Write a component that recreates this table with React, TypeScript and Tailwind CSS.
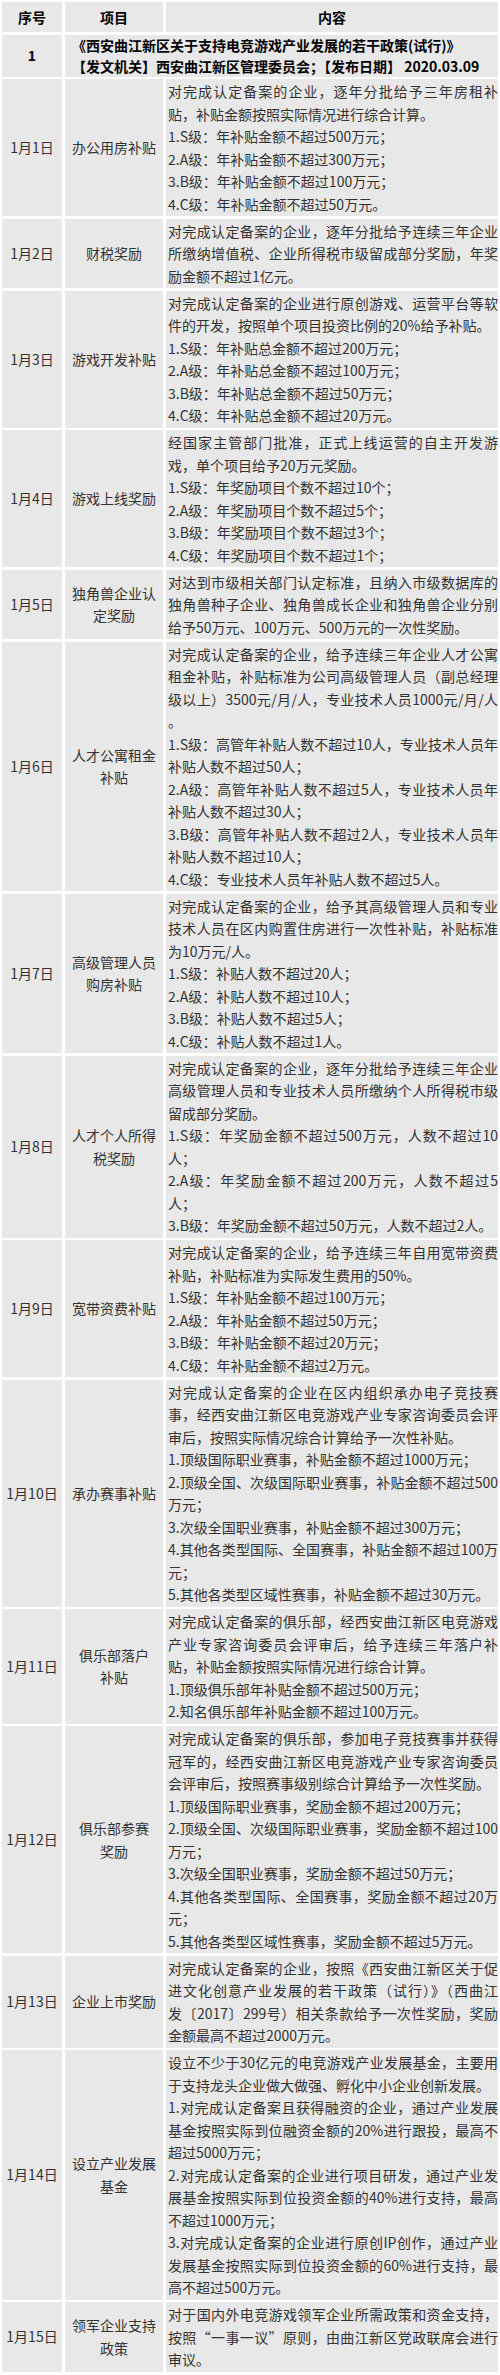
const FONT = "font-['Noto_Sans_CJK_SC',sans-serif]"

interface Row {
  no: string
  item: string[]
  content: string[][]
}

// each paragraph is a list of visual lines; every line but the last is justified
const ROWS: Row[] = [
  {
    no: '1月1日',
    item: ['办公用房补贴'],
    content: [
      ['对完成认定备案的企业，逐年分批给予三年房租补', '贴，补贴金额按照实际情况进行综合计算。'],
      ['1.S级：年补贴金额不超过500万元；'],
      ['2.A级：年补贴金额不超过300万元；'],
      ['3.B级：年补贴金额不超过100万元；'],
      ['4.C级：年补贴金额不超过50万元。'],
    ],
  },
  {
    no: '1月2日',
    item: ['财税奖励'],
    content: [
      [
        '对完成认定备案的企业，逐年分批给予连续三年企业',
        '所缴纳增值税、企业所得税市级留成部分奖励，年奖',
        '励金额不超过1亿元。',
      ],
    ],
  },
  {
    no: '1月3日',
    item: ['游戏开发补贴'],
    content: [
      ['对完成认定备案的企业进行原创游戏、运营平台等软', '件的开发，按照单个项目投资比例的20%给予补贴。'],
      ['1.S级：年补贴总金额不超过200万元；'],
      ['2.A级：年补贴总金额不超过100万元；'],
      ['3.B级：年补贴总金额不超过50万元；'],
      ['4.C级：年补贴总金额不超过20万元。'],
    ],
  },
  {
    no: '1月4日',
    item: ['游戏上线奖励'],
    content: [
      ['经国家主管部门批准，正式上线运营的自主开发游', '戏，单个项目给予20万元奖励。'],
      ['1.S级：年奖励项目个数不超过10个；'],
      ['2.A级：年奖励项目个数不超过5个；'],
      ['3.B级：年奖励项目个数不超过3个；'],
      ['4.C级：年奖励项目个数不超过1个；'],
    ],
  },
  {
    no: '1月5日',
    item: ['独角兽企业认', '定奖励'],
    content: [
      [
        '对达到市级相关部门认定标准，且纳入市级数据库的',
        '独角兽种子企业、独角兽成长企业和独角兽企业分别',
        '给予50万元、100万元、500万元的一次性奖励。',
      ],
    ],
  },
  {
    no: '1月6日',
    item: ['人才公寓租金', '补贴'],
    content: [
      [
        '对完成认定备案的企业，给予连续三年企业人才公寓',
        '租金补贴，补贴标准为公司高级管理人员（副总经理',
        '级以上）3500元/月/人，专业技术人员1000元/月/人',
        '。',
      ],
      ['1.S级：高管年补贴人数不超过10人，专业技术人员年', '补贴人数不超过50人；'],
      ['2.A级：高管年补贴人数不超过5人，专业技术人员年', '补贴人数不超过30人；'],
      ['3.B级：高管年补贴人数不超过2人，专业技术人员年', '补贴人数不超过10人；'],
      ['4.C级：专业技术人员年补贴人数不超过5人。'],
    ],
  },
  {
    no: '1月7日',
    item: ['高级管理人员', '购房补贴'],
    content: [
      [
        '对完成认定备案的企业，给予其高级管理人员和专业',
        '技术人员在区内购置住房进行一次性补贴，补贴标准',
        '为10万元/人。',
      ],
      ['1.S级：补贴人数不超过20人；'],
      ['2.A级：补贴人数不超过10人；'],
      ['3.B级：补贴人数不超过5人；'],
      ['4.C级：补贴人数不超过1人。'],
    ],
  },
  {
    no: '1月8日',
    item: ['人才个人所得', '税奖励'],
    content: [
      [
        '对完成认定备案的企业，逐年分批给予连续三年企业',
        '高级管理人员和专业技术人员所缴纳个人所得税市级',
        '留成部分奖励。',
      ],
      ['1.S级：年奖励金额不超过500万元，人数不超过10', '人；'],
      ['2.A级：年奖励金额不超过200万元，人数不超过5', '人；'],
      ['3.B级：年奖励金额不超过50万元，人数不超过2人。'],
    ],
  },
  {
    no: '1月9日',
    item: ['宽带资费补贴'],
    content: [
      ['对完成认定备案的企业，给予连续三年自用宽带资费', '补贴，补贴标准为实际发生费用的50%。'],
      ['1.S级：年补贴金额不超过100万元；'],
      ['2.A级：年补贴金额不超过50万元；'],
      ['3.B级：年补贴金额不超过20万元；'],
      ['4.C级：年补贴金额不超过2万元。'],
    ],
  },
  {
    no: '1月10日',
    item: ['承办赛事补贴'],
    content: [
      [
        '对完成认定备案的企业在区内组织承办电子竞技赛',
        '事，经西安曲江新区电竞游戏产业专家咨询委员会评',
        '审后，按照实际情况综合计算给予一次性补贴。',
      ],
      ['1.顶级国际职业赛事，补贴金额不超过1000万元；'],
      ['2.顶级全国、次级国际职业赛事，补贴金额不超过500', '万元；'],
      ['3.次级全国职业赛事，补贴金额不超过300万元；'],
      ['4.其他各类型国际、全国赛事，补贴金额不超过100万', '元；'],
      ['5.其他各类型区域性赛事，补贴金额不超过30万元。'],
    ],
  },
  {
    no: '1月11日',
    item: ['俱乐部落户', '补贴'],
    content: [
      [
        '对完成认定备案的俱乐部，经西安曲江新区电竞游戏',
        '产业专家咨询委员会评审后，给予连续三年落户补',
        '贴，补贴金额按照实际情况进行综合计算。',
      ],
      ['1.顶级俱乐部年补贴金额不超过500万元；'],
      ['2.知名俱乐部年补贴金额不超过100万元。'],
    ],
  },
  {
    no: '1月12日',
    item: ['俱乐部参赛', '奖励'],
    content: [
      [
        '对完成认定备案的俱乐部，参加电子竞技赛事并获得',
        '冠军的，经西安曲江新区电竞游戏产业专家咨询委员',
        '会评审后，按照赛事级别综合计算给予一次性奖励。',
      ],
      ['1.顶级国际职业赛事，奖励金额不超过200万元；'],
      ['2.顶级全国、次级国际职业赛事，奖励金额不超过100', '万元；'],
      ['3.次级全国职业赛事，奖励金额不超过50万元；'],
      ['4.其他各类型国际、全国赛事，奖励金额不超过20万', '元；'],
      ['5.其他各类型区域性赛事，奖励金额不超过5万元。'],
    ],
  },
  {
    no: '1月13日',
    item: ['企业上市奖励'],
    content: [
      [
        '对完成认定备案的企业，按照《西安曲江新区关于促',
        '进文化创意产业发展的若干政策（试行）》（西曲江',
        '发〔2017〕299号）相关条款给予一次性奖励，奖励',
        '金额最高不超过2000万元。',
      ],
    ],
  },
  {
    no: '1月14日',
    item: ['设立产业发展', '基金'],
    content: [
      ['设立不少于30亿元的电竞游戏产业发展基金，主要用', '于支持龙头企业做大做强、孵化中小企业创新发展。'],
      [
        '1.对完成认定备案且获得融资的企业，通过产业发展',
        '基金按照实际到位融资金额的20%进行跟投，最高不',
        '超过5000万元；',
      ],
      [
        '2.对完成认定备案的企业进行项目研发，通过产业发',
        '展基金按照实际到位投资金额的40%进行支持，最高',
        '不超过1000万元；',
      ],
      [
        '3.对完成认定备案的企业进行原创IP创作，通过产业',
        '发展基金按照实际到位投资金额的60%进行支持，最',
        '高不超过500万元。',
      ],
    ],
  },
  {
    no: '1月15日',
    item: ['领军企业支持', '政策'],
    content: [
      [
        '对于国内外电竞游戏领军企业所需政策和资金支持，',
        '按照“一事一议”原则，由曲江新区党政联席会进行',
        '审议。',
      ],
    ],
  },
]

function Content({ paragraphs }: { paragraphs: string[][] }) {
  return (
    <div className="bg-[#e8e8e8] py-px pl-[2px] text-[14px] leading-[22.5px] text-[#333]">
      {paragraphs.map((para, p) => (
        <div key={p}>
          {para.map((line, i) =>
            i < para.length - 1 ? (
              <div key={i} className="text-justify [text-align-last:justify]">
                {line}
              </div>
            ) : (
              <div key={i} className="whitespace-nowrap">
                {line}
              </div>
            )
          )}
        </div>
      ))}
    </div>
  )
}

export default function App() {
  return (
    <div className={`${FONT} w-[500px] bg-white p-[2px]`}>
      <div className="grid grid-cols-[60px_98px_1fr] gap-x-[3px] gap-y-[2.5px]">
        {/* header */}
        <div className="flex h-[30px] items-center justify-center bg-[#e8e8e8] text-[14px] font-bold text-black">序号</div>
        <div className="flex h-[30px] items-center justify-center bg-[#e8e8e8] text-[14px] font-bold text-black">项目</div>
        <div className="flex h-[30px] items-center justify-center bg-[#e8e8e8] text-[14px] font-bold text-black">内容</div>

        {/* policy title */}
        <div className="flex h-[42px] items-center justify-center bg-[#e8e8e8] text-[14px] font-bold text-black">1</div>
        <div className="col-span-2 flex h-[42px] flex-col justify-center bg-[#e8e8e8] pl-[7px] text-[14px] font-bold leading-[20.5px] text-black">
          <div className="whitespace-nowrap">《西安曲江新区关于支持电竞游戏产业发展的若干政策(试行)》</div>
          <div className="whitespace-nowrap">【发文机关】西安曲江新区管理委员会；【发布日期】 2020.03.09</div>
        </div>

        {ROWS.map((row) => (
          <div key={row.no} className="contents">
            <div className="flex items-center justify-center bg-[#e8e8e8] text-[14px] text-[#333]">{row.no}</div>
            <div className="flex flex-col items-center justify-center bg-[#e8e8e8] text-[14px] leading-[22.5px] text-[#333]">
              {row.item.map((t) => (
                <div key={t} className="whitespace-nowrap">
                  {t}
                </div>
              ))}
            </div>
            <Content paragraphs={row.content} />
          </div>
        ))}
      </div>
    </div>
  )
}
